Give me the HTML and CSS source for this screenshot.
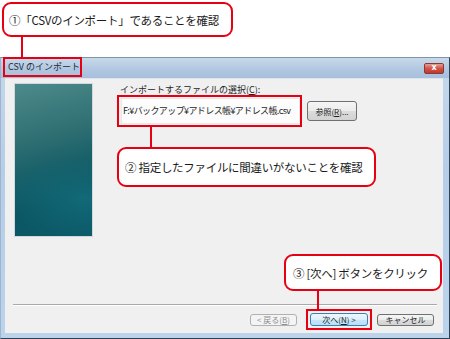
FILE: index.html
```html
<!DOCTYPE html>
<html lang="ja">
<head>
    <meta charset="UTF-8">
    <title>CSVのインポート</title>
    <link rel="stylesheet" href="styles.css">
</head>
<body>
<div class="page">
    <div class="callout callout-top">①「CSVのインポート」であることを確認</div>
    <div class="connector"></div>

    <div class="window">
        <div class="titlebar">
            <span class="title mark">CSV のインポート</span>
            <span class="close">x</span>
        </div>
        <div class="client">
            <div class="main">
                <div class="side-img"></div>
                <div class="form">
                    <div class="label">インポートするファイルの選択(<u>C</u>):</div>
                    <div class="file-row">
                        <div class="mark file-mark">
                            <div class="file-field">F:¥バックアップ¥アドレス帳¥アドレス帳.csv</div>
                        </div>
                        <button class="btn btn-browse">参照(<u>R</u>)...</button>
                    </div>
                </div>
            </div>
            <div class="separator"></div>
            <div class="buttons">
                <button class="btn btn-back" disabled>&lt; 戻る(<u>B</u>)</button>
                <div class="mark next-mark">
                    <button class="btn btn-next">次へ(<u>N</u>) &gt;</button>
                </div>
                <button class="btn btn-cancel">キャンセル</button>
            </div>
        </div>
    </div>

    <!-- 注釈 -->
    <div class="callout callout-file">② 指定したファイルに間違いがないことを確認</div>
    <div class="callout callout-next">③ [次へ] ボタンをクリック</div>
</div>
</body>
</html>
```

FILE: styles.css
```css
*{
    padding: 0;
    margin: 0;
    box-sizing: border-box;
}
body{
    background: #fff;
    font-family: "Noto Sans CJK JP", "Noto Sans", sans-serif;
    color: #1e1e1e;
}
.page{
    width: 450px;
    height: 339px;
    position: relative;
    overflow: hidden;
}
.callout{
    background: #fff;
    border: 2px solid #e60012;
    border-radius: 9px;
    font-size: 11.5px;
    line-height: 14px;
    color: #1a1a1a;
    display: flex;
    align-items: center;
    padding-left: 5px;
    letter-spacing: -0.3px;
    white-space: nowrap;
}
.callout-top{
    margin: 2px 0 0 2px;
    width: 231px;
    height: 35px;
}
.connector{
    width: 2px;
    height: 20px;
    margin-left: 21px;
    background: #e60012;
}
.callout-file{
    position: absolute;
    left: 117px;
    top: 147px;
    width: 259px;
    height: 40px;
    padding-left: 6px;
}
.callout-next{
    position: absolute;
    left: 284px;
    top: 254px;
    width: 158px;
    height: 37px;
    padding-left: 7px;
}
.callout-file:before,
.callout-next:before{
    content: '';
    position: absolute;
    width: 2px;
    background: #e60012;
}
.callout-file:before{
    left: 31px;
    top: -22px;
    height: 20px;
}
.callout-next:before{
    left: 31px;
    bottom: -20px;
    height: 18px;
}

.mark{
    border: 2px solid #e60012;
}

/* window */
.window{
    width: 450px;
    height: 282px;
    border-top: 1px solid #8093a8;
    border-left: 1px solid #9fb4cf;
    border-right: 1px solid #2e4256;
    border-bottom: 1px solid #2e4256;
    background: linear-gradient(to bottom, #c5d8ec, #b6cde8 40%, #bcd3ec);
}
.titlebar{
    height: 20px;
    display: flex;
    align-items: flex-start;
    background: linear-gradient(to bottom, #c9d9ea, #b3c9e2 50%, #a6bfdd);
}
.title{
    margin: -1px 0 0 2px;
    width: 79px;
    height: 20px;
    font-size: 9px;
    line-height: 16px;
    padding-left: 3px;
    color: #1e2a36;
    white-space: nowrap;
}
.close{
    margin: 5px 5px 0 auto;
    width: 20px;
    height: 11px;
    border: 1px solid #8a3a33;
    border-radius: 2px;
    background: linear-gradient(to bottom, #e6a093, #d0544a 50%, #c0392d);
    color: #fff;
    font-size: 8px;
    font-weight: bold;
    line-height: 8px;
    text-align: center;
    font-family: "DejaVu Sans", sans-serif;
}
.client{
    margin-left: 4px;
    width: 438px;
    height: 255px;
    background: #f0f0f0;
    border-top: 1px solid #dfe4ea;
    padding-top: 4px;
}
.main{
    height: 221px;
    display: flex;
}
.side-img{
    margin-left: 9px;
    width: 79px;
    height: 154px;
    border: 1px solid #cfd9dc;
    background:
        radial-gradient(ellipse 120px 60px at 90% 75%, rgba(20,110,125,0.8), rgba(20,110,125,0) 70%),
        linear-gradient(165deg, #4d8a8b 0%, #2f6f72 35%, #175f68 55%, #0b5562 75%, #0b5a69 100%);
}
.form{
    margin-left: 24px;
}
.label{
    margin-top: 1px;
    padding-left: 3px;
    height: 11px;
    font-size: 9px;
    line-height: 11px;
    white-space: nowrap;
}
.file-row{
    display: flex;
    align-items: center;
}
.file-mark{
    width: 185px;
    height: 32px;
    padding: 1px 0 1px 2px;
}
.file-field{
    width: 179px;
    height: 26px;
    background: #fcfcfc;
    border: 1px solid #e8e8e8;
    font-size: 9px;
    line-height: 24px;
    padding-left: 1px;
    white-space: nowrap;
    letter-spacing: -0.6px;
}
.btn{
    font-family: "Noto Sans CJK JP", "Noto Sans", sans-serif;
    font-size: 8px;
    color: #1e1e1e;
    border: 1px solid #707070;
    border-radius: 3px;
    background: linear-gradient(to bottom, #f6f6f6, #ebebeb 50%, #dcdcdc 50%, #d2d2d2);
    white-space: nowrap;
}
.btn-browse{
    margin-left: 5px;
    width: 50px;
    height: 20px;
}
.separator{
    margin: 0 6px 0 8px;
    border-top: 1px solid #a9a9a9;
    border-bottom: 1px solid #fff;
}
.buttons{
    margin-top: 3px;
    height: 21px;
    display: flex;
    align-items: center;
    justify-content: flex-end;
    padding-right: 9px;
}
.btn-back{
    width: 47px;
    height: 12px;
    line-height: 10px;
    color: #8d8d8d;
    border-color: #adb2b5;
    background: #f4f4f4;
}
.next-mark{
    margin-left: 9px;
    width: 66px;
    height: 21px;
    padding: 0 2px;
    display: flex;
    align-items: center;
}
.btn-next{
    width: 58px;
    height: 13px;
    line-height: 11px;
    border-color: #3c7fb1;
    background: linear-gradient(to bottom, #eef7fd, #dcf0fc 50%, #c6e7fb 50%, #b9e0f9);
}
.btn-cancel{
    margin-left: 5px;
    width: 57px;
    height: 12px;
    line-height: 10px;
}
```
